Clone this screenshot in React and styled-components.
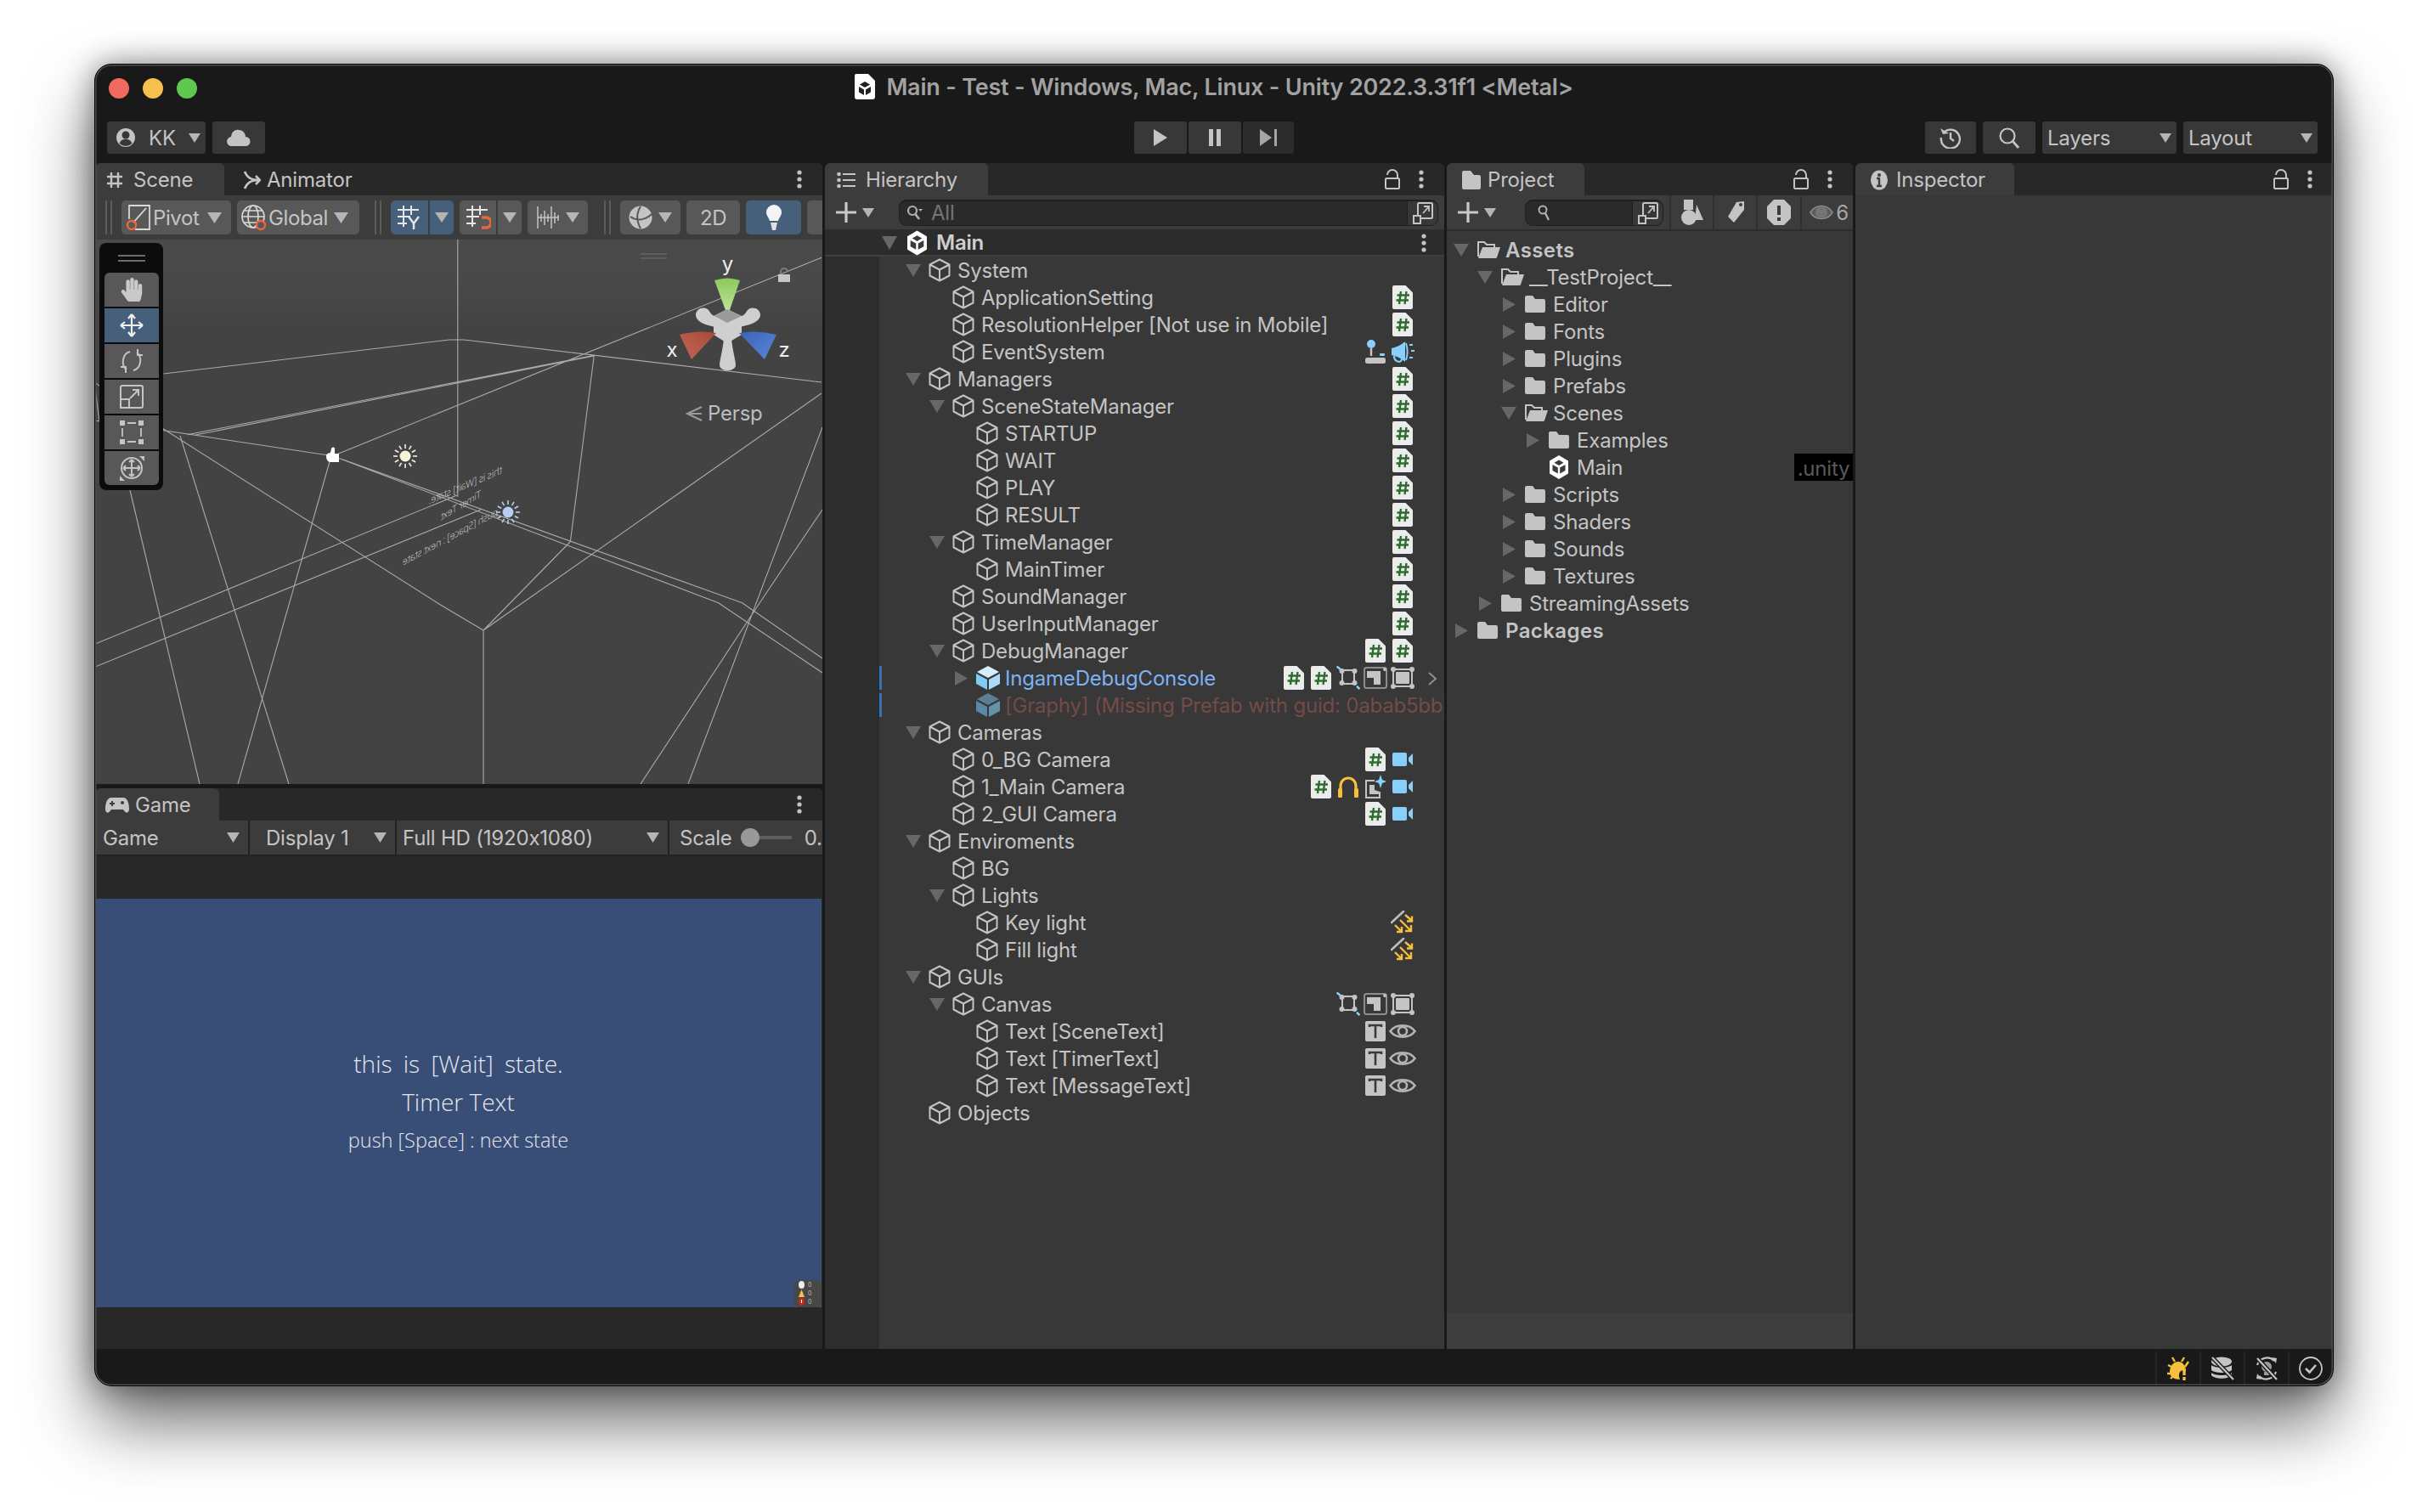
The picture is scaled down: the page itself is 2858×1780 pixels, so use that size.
import React from 'react';
import styled, { createGlobalStyle } from 'styled-components';
import { FaHandPaper } from 'react-icons/fa';

const FONT = 'Inter, "Liberation Sans", sans-serif';
const TXT = '#c4c4c4';
const BLUE = '#88cffb';
const YEL = '#f6bf3c';

const Global = createGlobalStyle`
  html, body { margin: 0; padding: 0; background: #fff; }
  body { font-family: ${FONT}; font-size: 24px; color: ${TXT}; letter-spacing: -0.2px; font-feature-settings: "calt" 0; }
  * { box-sizing: border-box; }
`;

const Page = styled.div`
  width: 2858px; height: 1780px; padding: 75px 111px; background: #fff; overflow: hidden;
`;
const Win = styled.div`
  position: relative; width: 2636px; height: 1557px; background: #191919;
  border: 1px solid #000; border-radius: 20px; overflow: hidden;
  display: flex; flex-direction: column;
`;
const WinShadow = styled.div`
  border-radius: 20px;
  box-shadow: 0 42px 80px rgba(0,0,0,.58), 0 0 34px rgba(0,0,0,.42);
`;
const WinEdge = styled.div`
  position: absolute; inset: 0; border-radius: 19px; pointer-events: none;
  box-shadow: inset 0 0 0 1.5px #4e4e4e;
`;
const TitleBar = styled.div`
  flex: none; height: 56px; padding-bottom: 4px; display: grid; grid-template-columns: 1fr auto 1fr; align-items: center;
`;
const Lights = styled.div`display: flex; gap: 16px; padding: 4px 0 0 16px;`;
const Light = styled.span`width: 24px; height: 24px; border-radius: 50%; background: ${p => p.$c};`;
const TitleText = styled.div`
  display: flex; align-items: center; gap: 13px; font-size: 27px; font-weight: 600; color: #a2a2a2; letter-spacing: -0.2px; white-space: nowrap;
`;
const Toolbar = styled.div`
  flex: none; height: 60px; padding: 0 18px; display: grid; grid-template-columns: 1fr auto 1fr; align-items: center;
`;
const TopGroup = styled.div`display: flex; gap: ${p => p.$gap ?? 8}px; justify-content: ${p => p.$end ? 'flex-end' : 'flex-start'}; margin-left: ${p => p.$ml ?? 0}px;`;
const TopBtn = styled.div`
  width: ${p => p.$w}px; height: 38px; background: ${p => p.$bg || '#383838'}; border-radius: 3px;
  display: flex; align-items: center; justify-content: ${p => p.$between ? 'space-between' : 'center'};
  padding: ${p => p.$between ? `0 6px 0 ${p.$pl ?? 6}px` : '0'}; font-size: 24px; color: ${TXT};
`;
const Panels = styled.div`
  flex: none; height: 1396px; display: grid; grid-template-columns: 856px 729px 478px 1fr; gap: 3px; 
`;
const LeftCol = styled.div`display: flex; flex-direction: column; gap: 5px; min-height: 0;`;
const Panel = styled.section`
  display: flex; flex-direction: column; background: #383838; min-height: 0; overflow: hidden; border-radius: 6px 6px 0 0;
  flex: ${p => p.$h ? `none` : 1}; height: ${p => p.$h ? `${p.$h}px` : 'auto'}; position: relative;
`;
const TabBar = styled.div`flex: none; height: 38px; background: #282828; display: flex; align-items: stretch;`;
const Tab = styled.div`
  display: flex; align-items: center; gap: ${p => p.$gap ?? 9}px; width: ${p => p.$w ? `${p.$w}px` : 'auto'}; padding: 2px 0 0 ${p => p.$pad ?? 8}px;
  background: ${p => p.$on ? '#3c3c3c' : 'transparent'}; color: ${TXT}; font-size: 24px; border-radius: 6px 6px 0 0; line-height: 1; margin-left: ${p => p.$ml ?? 0}px;
`;
const TabActions = styled.div`
  margin-left: auto; display: flex; align-items: center; gap: 22px; padding-right: ${p => p.$pr}px;
`;

const SceneBar = styled.div`
  flex: none; height: 52px; background: #3c3c3c; display: flex; align-items: center; gap: 11px; padding-left: 12px; overflow: hidden;
`;
const Cluster = styled.div`display: flex; gap: 7px;`;
const Handle = styled.i`
  flex: none; width: 8px; height: 40px; margin-left: ${p => p.$ml ?? 0}px; border-left: 2px solid #5c5c5c; border-right: 2px solid #5c5c5c;
`;
const SBtn = styled.div`
  flex: none; display: flex; align-items: center; justify-content: ${p => p.$c ? 'center' : 'flex-start'}; width: ${p => p.$w}px; height: 40px; border-radius: 5px;
  background: ${p => p.$on ? '#46607c' : '#585858'}; color: ${TXT}; font-size: 24px; padding: ${p => p.$c ? 0 : '0 0 0 5px'}; gap: ${p => p.$gap ?? 2}px;
  letter-spacing: -0.4px;
`;
const Spacer = styled.span`flex: none; width: ${p => p.$w}px;`;
const Split = styled.div`
  flex: none; display: flex; height: 40px; gap: 2px;
`;
const SplitPart = styled.div`
  width: ${p => p.$w}px; display: flex; align-items: center; justify-content: center; background: ${p => p.$on ? '#46607c' : '#585858'};
  border-radius: ${p => p.$left ? '5px 0 0 5px' : '0 5px 5px 0'};
`;

const SceneView = styled.div`flex: 1; position: relative; min-height: 0; background: #484848; overflow: hidden;`;
const SceneSvg = styled.svg`display: block; width: 856px; height: 641px;`;
const ToolDock = styled.div`
  position: absolute; left: 5px; top: 4px; width: 75px; height: 291px; background: #0c0c0c; border-radius: 8px;
  display: flex; flex-direction: column; align-items: center; gap: 2px;
`;
const DockGrip = styled.div`
  flex: none; width: 32px; height: 33px; display: flex; flex-direction: column; gap: 4px; justify-content: center; padding-top: 2px;
  & > i { height: 2px; background: #6c6c6c; display: block; }
`;
const DockBtn = styled.div`
  flex: none; width: 64px; height: 40px; background: ${p => p.$on ? '#46607c' : '#585858'}; border-radius: ${p => p.$top ? '6px 6px 0 0' : p.$bot ? '0 0 6px 6px' : '0'};
  display: flex; align-items: center; justify-content: center; color: #c9c9c9;
`;
const Persp = styled.div`
  position: absolute; left: 695px; top: 192px; display: flex; align-items: center; gap: 6px; font-size: 24px; color: #bdbdbd; line-height: 26px;
`;

const GameBar = styled.div`flex: none; height: 42px; padding-bottom: 2px; background: #232323; display: flex; gap: 2px;`;
const GameDrop = styled.div`
  flex: none; width: ${p => p.$w}px; background: #3c3c3c; display: flex; align-items: center; padding: 0 10px 0 ${p => p.$pad}px; justify-content: space-between; font-size: 24px; color: ${TXT}; white-space: nowrap;
`;
const ScaleCell = styled.div`
  flex: 1; background: #3c3c3c; display: flex; align-items: center; padding-left: 12px; font-size: 24px; color: ${TXT}; overflow: hidden; white-space: nowrap;
`;
const SliderTrack = styled.div`
  position: relative; flex: none; width: 60px; height: 4px; margin: 0 15px 0 10px; background: #5e5e5e;
  &::before { content: ''; position: absolute; left: 0; top: -9px; width: 22px; height: 22px; border-radius: 50%; background: #999; }
`;
const GameBody = styled.div`
  flex: 1; min-height: 0; background: #282828; display: flex; flex-direction: column; justify-content: center; padding-right: 1px;
`;
const GameScreen = styled.div`
  position: relative; height: 481px; background: #394e76; display: flex; flex-direction: column; align-items: center; padding-top: 172px;
  font-family: "Open Sans", "Noto Sans", sans-serif; color: #e4e7ee; font-weight: 300; letter-spacing: 0;
`;
const GameLine = styled.div`
  height: ${p => p.$h}px; line-height: ${p => p.$h}px; font-size: ${p => p.$s}px; white-space: nowrap; word-spacing: ${p => p.$ws ?? 0}px;
`;
const Stats = styled.div`
  position: absolute; right: 0; bottom: 0; width: 32px; height: 32px; background: #474747; border-radius: 6px; padding: 1px 0 0 5px;
  display: flex; flex-direction: column; gap: 1px;
`;
const StatRow = styled.div`display: flex; align-items: center; gap: 4px; height: 9px; font-size: 7px; color: #bbb; font-family: ${FONT}; font-weight: 400; line-height: 9px;`;

const SubBar = styled.div`
  flex: none; height: 40px; background: #3c3c3c; display: flex; align-items: center; position: relative;
`;
const AddGroup = styled.div`flex: none; display: flex; align-items: center; gap: 6px; width: ${p => p.$w}px; padding-left: ${p => p.$pad}px;`;
const SearchBox = styled.div`
  flex: ${p => p.$w ? 'none' : 1}; width: ${p => p.$w ? `${p.$w}px` : 'auto'}; height: 31px; background: #2a2a2a; border: 1px solid #1f1f1f; border-top-width: 2px; border-radius: 9px; margin-right: ${p => p.$mr ?? 0}px;
  display: flex; align-items: center; padding-left: ${p => p.$pl ?? 14}px; gap: 9px; color: #757575; font-size: 24px; overflow: hidden;
`;
const SearchExpand = styled.div`
  margin-left: auto; flex: none; width: 36px; height: 100%; display: flex; align-items: center; justify-content: center; background: #383838; border-left: 1px solid #1f1f1f;
`;
const FilterBtn = styled.div`
  flex: ${p => p.$w ? 'none' : 1}; width: ${p => p.$w ? `${p.$w}px` : 'auto'}; height: 100%; background: #3c3c3c; border-left: 2px solid #303030; display: flex; align-items: center; justify-content: center; gap: 3px; padding-left: ${p => p.$pl ?? 0}px; font-size: 24px; color: #a8a8a8; overflow: hidden;
`;

const SceneHead = styled.div`
  flex: none; height: 32px; background: #2c2c2c; border-bottom: 2px solid #3f3f3f; display: flex; align-items: center; padding: 1px 21px 0 67px; font-weight: 600; color: #cfcfcf; font-size: 24px;
`;
const HeadKebab = styled.span`margin-left: auto;`;
const TreeWrap = styled.div`flex: 1; display: flex; min-height: 0;`;
const TreeGutter = styled.div`flex: none; width: 64px; background: #2d2d2d;`;
const TreeList = styled.div`flex: 1; min-width: 0;`;
const Row = styled.div`
  position: relative; height: 32px; display: flex; align-items: center; padding: 0 33px 0 ${p => 31 + p.$depth * 28}px; white-space: nowrap; overflow: hidden;
  color: ${p => p.$tone === 'blue' ? '#7db2f4' : p.$tone === 'miss' ? '#744a4a' : TXT};
  ${p => p.$mark ? `&::before { content: ''; position: absolute; left: 0; top: 2px; bottom: 2px; width: 3px; background: #3574ae; }` : ''}
`;
const ArrowBox = styled.span`flex: none; width: 18px; margin-right: ${p => p.$mr ?? 9}px; display: flex; align-items: center; justify-content: center;`;
const Name = styled.span`flex: none; margin-left: ${p => p.$ml ?? 8}px; font-weight: ${p => p.$bold ? 600 : 400}; letter-spacing: ${p => p.$bold ? '0.4px' : 'inherit'};`;
const RowIcons = styled.div`margin-left: auto; display: flex; flex: none;`;
const Slot = styled.span`flex: none; width: 32px; height: 32px; display: flex; align-items: center; justify-content: center;`;
const RowChevron = styled.span`position: absolute; right: 8px; top: 9px; display: flex;`;

const ProjectList = styled.div`flex: 1; min-height: 0; border-top: 2px solid #2c2c2c; padding-top: 6px;`;
const PRow = styled.div`
  height: 32px; display: flex; align-items: center; padding-left: ${p => 8 + p.$depth * 28}px; white-space: nowrap; color: ${TXT}; 
`;
const UnityTag = styled.span`
  margin-left: auto; align-self: stretch; width: 69px; background: #000; color: #5a5a5a; font-size: 24px; display: flex; align-items: center; justify-content: center; padding-top: 3px;
`;
const ProjectFoot = styled.div`flex: none; height: 42px; background: #3e3e3e;`;
const Status = styled.div`flex: 1; background: #191919; display: flex; justify-content: flex-end; padding-right: 1px;`;
const StatusCell = styled.div`
  width: 52px; height: 40px; margin-top: 3px; border-left: 2px solid #262626; display: flex; align-items: center; justify-content: center;
`;

/* ---------- icons ---------- */
const Svg = ({ w, h, vb, children, ...r }) => (
  <svg width={w} height={h} viewBox={vb || `0 0 ${w} ${h}`} style={{ display: 'block', flex: 'none' }} fill="none" {...r}>{children}</svg>
);
const Tri = ({ dir = 'down', w = 14, h = 11, c = '#b5b5b5' }) => (
  <Svg w={w} h={h} vb="0 0 10 10" preserveAspectRatio="none">
    <path d={dir === 'down' ? 'M0 0H10L5 10Z' : 'M0 0L10 5L0 10Z'} fill={c} />
  </Svg>
);
const Fold = ({ dir }) => dir === 'down' ? <Tri w={18} h={15} c="#676767" /> : <Tri dir="right" w={15} h={17} c="#676767" />;
const Cube = () => (
  <Svg w={26} h={28}><path d="M13 1.5 24.5 7.5V20.5L13 26.5 1.5 20.5V7.5ZM1.5 7.5 13 13.5 24.5 7.5M13 13.5V26.5" stroke="#c4c4c4" strokeWidth="2" strokeLinejoin="round" /></Svg>
);
const SolidCube = ({ a, b, c }) => (
  <Svg w={28} h={28}>
    <path d="M14 0 27 7 14 14 1 7Z" fill={a} />
    <path d="M0 9 13 16V28L0 21Z" fill={b} />
    <path d="M28 9 15 16V28L28 21Z" fill={c} />
  </Svg>
);
const UnityLogo = ({ w = 24, h = 28 }) => (
  <Svg w={w} h={h} vb="0 0 24 28">
    <path d="M12 0 23 6.5V21.5L12 28 1 21.5V6.5Z" fill="#fff" />
    <path d="M12 5.5 17.5 8.7 12 12 6.5 8.7ZM4.5 11 10.8 14.5V21.5L4.5 18ZM19.5 11 13.2 14.5V21.5L19.5 18Z" fill="#3a3a3a" />
  </Svg>
);
const Script = () => (
  <Svg w={24} h={28}>
    <path d="M2 0H15.5L24 8.5V26a2 2 0 0 1-2 2H2a2 2 0 0 1-2-2V2a2 2 0 0 1 2-2Z" fill="#ececec" />
    <path d="M10 7 8 22M16.5 7 14.5 22M5.5 11.5H20M4.5 17.5H19" stroke="#2f6b2f" strokeWidth="2.4" />
  </Svg>
);
const Joy = () => (
  <Svg w={24} h={28}>
    <circle cx="7" cy="5" r="5" fill={BLUE} /><path d="M7 10v9" stroke="#c4c4c4" strokeWidth="2.5" />
    <rect x="0" y="21" width="24" height="7" rx="2.5" fill="#c4c4c4" /><rect x="17" y="16" width="6" height="3" rx="1" fill={BLUE} />
  </Svg>
);
const Mega = () => (
  <Svg w={28} h={28}>
    <path d="M17 2C11 7 6 9 1 10v8c5 1 10 3 16 8Z" fill={BLUE} />
    <path d="M18 4c2 6 2 14 0 20M22 6h4M24 13h4M22 21h4" stroke={BLUE} strokeWidth="2" />
    <path d="M4 19c0 7 8 9 9 4" stroke={BLUE} strokeWidth="2.2" />
  </Svg>
);
const Cam = () => (
  <Svg w={24} h={16}>
    <rect width="17" height="16" rx="2" fill={BLUE} /><path d="M19 6 24 1V15L19 10Z" fill={BLUE} />
  </Svg>
);
const Phones = () => (
  <Svg w={24} h={26}>
    <path d="M3 24V12a9 9 0 0 1 18 0V24" stroke={YEL} strokeWidth="3.2" />
    <rect x="0" y="15" width="5" height="11" rx="1.5" fill={YEL} /><rect x="19" y="15" width="5" height="11" rx="1.5" fill={YEL} />
  </Svg>
);
const Spark = () => (
  <Svg w={26} h={28}>
    <path d="M12 7H2V27H18V20" stroke="#c4c4c4" strokeWidth="2" /><path d="M6 12H12V18L18 20V23H6Z" fill="#c4c4c4" />
    <path d="M19 0l2 6 5 2-5 2-2 6-2-6-5-2 5-2Z" fill={BLUE} />
  </Svg>
);
const RectT = () => (
  <Svg w={28} h={28}>
    <path d="M5 4 .5.5M24 24l3.5 3" stroke={BLUE} strokeWidth="2.4" />
    <rect x="7" y="5" width="14" height="16" stroke="#c4c4c4" strokeWidth="2" />
    <circle cx="6.5" cy="6" r="3" fill="#c4c4c4" /><circle cx="21.5" cy="6" r="3" fill="#c4c4c4" /><circle cx="6.5" cy="20" r="3" fill="#c4c4c4" /><circle cx="21.5" cy="20" r="3" fill="#c4c4c4" />
  </Svg>
);
const CanvasIco = () => (
  <Svg w={28} h={26}>
    <rect x="1" y="1" width="26" height="24" rx="2.5" stroke="#8d8d8d" strokeWidth="2" />
    <path d="M4 5H20V21H12V13H4Z" fill="#c4c4c4" />
    <circle cx="25" cy="3" r="2" fill="#c4c4c4" />
  </Svg>
);
const RectFill = () => (
  <Svg w={28} h={26}>
    <rect x="3" y="3" width="22" height="20" stroke="#c4c4c4" strokeWidth="2" /><rect x="6" y="6" width="16" height="14" rx="1" fill="#c4c4c4" />
    <circle cx="3" cy="3" r="3" fill="#c4c4c4" /><circle cx="25" cy="3" r="3" fill="#c4c4c4" /><circle cx="3" cy="23" r="3" fill="#c4c4c4" /><circle cx="25" cy="23" r="3" fill="#c4c4c4" />
  </Svg>
);
const DirLight = () => (
  <Svg w={28} h={28}>
    <path d="M1 14 15 1" stroke="#bdbdbd" strokeWidth="2.6" strokeLinecap="round" />
    <g stroke={YEL} strokeWidth="2.4" fill="none">
      <path d="M17 5 25 12M25 6.5V12.5H19" /><path d="M11 11 24 24M24 17V24H17" /><path d="M5 17 13 25M13 19V25H7" />
    </g>
  </Svg>
);
const TextIco = () => (
  <Svg w={24} h={24}>
    <rect width="24" height="24" rx="2" fill="#c4c4c4" /><path d="M5 7V5H19V7M12 5V20" stroke="#3a3a3a" strokeWidth="2.6" />
  </Svg>
);
const EyeIco = () => (
  <Svg w={32} h={24}>
    <path d="M1.5 12C8 3 24 3 30.5 12 24 21 8 21 1.5 12Z" stroke="#b4b4b4" strokeWidth="2.6" />
    <circle cx="16" cy="12" r="5" stroke="#b4b4b4" strokeWidth="2.6" />
  </Svg>
);
const Chev = () => <Svg w={12} h={16}><path d="M2 1 10 8 2 15" stroke="#8f8f8f" strokeWidth="2" /></Svg>;
const FolderIco = () => (
  <Svg w={24} h={20}><path d="M0 2a2 2 0 0 1 2-2h7l3 4h10a2 2 0 0 1 2 2v12a2 2 0 0 1-2 2H2a2 2 0 0 1-2-2Z" fill="#c4c4c4" /></Svg>
);
const FolderOpen = () => (
  <Svg w={27} h={20}>
    <path d="M1 18V1H8l3 3h9v3" stroke="#c4c4c4" strokeWidth="2" fill="none" />
    <path d="M6 7H27L23 19a1.5 1.5 0 0 1-1.4 1H1Z" fill="#c4c4c4" />
  </Svg>
);
const Lock = () => (
  <Svg w={18} h={24}><rect x="1" y="11" width="16" height="12" rx="1" stroke="#c4c4c4" strokeWidth="2" /><path d="M3 7a6 6 0 0 1 12 0v4" stroke="#c4c4c4" strokeWidth="2" /></Svg>
);
const Kebab = () => (
  <Svg w={6} h={22}><circle cx="3" cy="3" r="2.6" fill="#c4c4c4" /><circle cx="3" cy="11" r="2.6" fill="#c4c4c4" /><circle cx="3" cy="19" r="2.6" fill="#c4c4c4" /></Svg>
);
const PlusIco = ({ s = 26 }) => (
  <Svg w={s} h={s} vb="0 0 26 26"><path d="M13 1V25M1 13H25" stroke="#c8c8c8" strokeWidth="3.2" /></Svg>
);
const MagSm = ({ s = 20, c = '#b0b0b0' }) => (
  <Svg w={s} h={s} vb="0 0 20 20"><circle cx="7" cy="7" r="5" stroke={c} strokeWidth="2.2" /><path d="M10.5 11 15 17" stroke={c} strokeWidth="2.6" /><path d="M14 5h5l-2.5 3Z" fill={c} /></Svg>
);
const Expand = () => (
  <Svg w={24} h={26}><rect x="6" y="1" width="17" height="18" rx="1.5" stroke="#c4c4c4" strokeWidth="2" /><rect x="1" y="16" width="8" height="9" stroke="#c4c4c4" strokeWidth="2" fill="#383838" /><path d="M12 13 19 5M13 5H19V11" stroke="#c4c4c4" strokeWidth="1.8" /></Svg>
);

const iconMap = { s: Script, j: Joy, m: Mega, c: Cam, h: Phones, p: Spark, r: RectT, v: CanvasIco, f: RectFill, l: DirLight, t: TextIco, e: EyeIco };

const tree = [
  [0, 'System', 'down', ''],
  [1, 'ApplicationSetting', null, 's'],
  [1, 'ResolutionHelper [Not use in Mobile]', null, 's'],
  [1, 'EventSystem', null, 'jm'],
  [0, 'Managers', 'down', 's'],
  [1, 'SceneStateManager', 'down', 's'],
  [2, 'STARTUP', null, 's'],
  [2, 'WAIT', null, 's'],
  [2, 'PLAY', null, 's'],
  [2, 'RESULT', null, 's'],
  [1, 'TimeManager', 'down', 's'],
  [2, 'MainTimer', null, 's'],
  [1, 'SoundManager', null, 's'],
  [1, 'UserInputManager', null, 's'],
  [1, 'DebugManager', 'down', 'ss'],
  [2, 'IngameDebugConsole', 'right', 'ssrvf', 'blue'],
  [2, '[Graphy] (Missing Prefab with guid: 0abab5bb)', null, '', 'miss'],
  [0, 'Cameras', 'down', ''],
  [1, '0_BG Camera', null, 'sc'],
  [1, '1_Main Camera', null, 'shpc'],
  [1, '2_GUI Camera', null, 'sc'],
  [0, 'Enviroments', 'down', ''],
  [1, 'BG', null, ''],
  [1, 'Lights', 'down', ''],
  [2, 'Key light', null, 'l'],
  [2, 'Fill light', null, 'l'],
  [0, 'GUIs', 'down', ''],
  [1, 'Canvas', 'down', 'rvf'],
  [2, 'Text [SceneText]', null, 'te'],
  [2, 'Text [TimerText]', null, 'te'],
  [2, 'Text [MessageText]', null, 'te'],
  [0, 'Objects', null, ''],
];

const project = [
  [0, 'Assets', 'down', 'open', true],
  [1, '__TestProject__', 'down', 'open'],
  [2, 'Editor', 'right', 'f'],
  [2, 'Fonts', 'right', 'f'],
  [2, 'Plugins', 'right', 'f'],
  [2, 'Prefabs', 'right', 'f'],
  [2, 'Scenes', 'down', 'open'],
  [3, 'Examples', 'right', 'f'],
  [3, 'Main', null, 'unity'],
  [2, 'Scripts', 'right', 'f'],
  [2, 'Shaders', 'right', 'f'],
  [2, 'Sounds', 'right', 'f'],
  [2, 'Textures', 'right', 'f'],
  [1, 'StreamingAssets', 'right', 'f'],
  [0, 'Packages', 'right', 'f', true],
];

/* ---------- scene drawing: coordinates are page pixels ---------- */
const HY = 340, BY = 923;
function family(vpx, step, tmin) {
  const reach = 1700;
  const n = Math.ceil(reach / tmin / step);
  let d = '';
  for (let i = -n; i <= n; i++) {
    if (i === 0) continue;
    const off = i * step;
    const t = Math.min(1, Math.max(tmin, reach / Math.abs(off)));
    const y0 = HY + (BY - HY) * t;
    const x0 = vpx + off * t;
    d += `M${x0.toFixed(1)} ${y0.toFixed(1)}L${(vpx + off).toFixed(1)} ${BY}`;
  }
  return d;
}
const GRID = [
  { d: family(-140, 8.6, 0.1), o: 0.04 },
  { d: family(1340, 8.6, 0.1), o: 0.04 },
  { d: family(-140, 86, 0.025), o: 0.2 },
  { d: family(1340, 86, 0.025), o: 0.2 },
];
const Z = (x, y) => `${(100 + x / 1.782).toFixed(1)} ${(290 + y / 3).toFixed(1)}`;
const zLine = (a, b, c, d) => `M${Z(a, b)}L${Z(c, d)}`;
const BRIGHT = [
  zLine(165, 450, 765, 330), zLine(765, 330, 795, 330), zLine(795, 330, 1545, 480),
  zLine(215, 665, 1068, 385), zLine(230, 667, 1068, 387),
  zLine(165, 650, 520, 740),
  zLine(520, 740, 1545, 40),
  zLine(520, 740, 1330, 1260), zLine(540, 752, 1380, 1260),
  zLine(782, -30, 782, 885),
  zLine(20, 480, 30, 615), zLine(20, 615, 165, 650), zLine(20, 480, 165, 650),
  'M212 513L340 923', 'M389 540L280 923',
  zLine(1068, 385, 1018, 1045), 'M671 638L569 742', 'M967 463L569 742',
  'M538 583L112 758', 'M566 600L112 785',
  zLine(160, 640, 740, 1260), 'M515 710L569 742',
  'M569 742V923',
  'M754 923L894 710L968 600', 'M810 923L968 503',
  'M153 577L235 923', 'M846 710L968 792', 'M874 710L968 775',
].join('');

const Sun = ({ x, y, c }) => (
  <g transform={`translate(${x} ${y})`}>
    {[...Array(12)].map((_, i) => {
      const a = i * Math.PI / 6;
      return <line key={i} x1={Math.cos(a) * 9} y1={Math.sin(a) * 9} x2={Math.cos(a) * 14} y2={Math.sin(a) * 14} stroke={c} strokeWidth="1.6" />;
    })}
    <circle r="6.5" fill={c} />
  </g>
);

const GizmoArm = ({ d }) => <path d={d} fill="#cfcfcf" />;

const SceneDrawing = () => (
  <SceneSvg viewBox="112 282 856 641">
    <defs>
      <linearGradient id="skyg" x1="0" y1="0" x2="0" y2="1">
        <stop offset="0" stopColor="#4a4a4a" /><stop offset="0.09" stopColor="#484848" /><stop offset="0.16" stopColor="#434343" /><stop offset="1" stopColor="#434343" />
      </linearGradient>
      <linearGradient id="gy" x1="0" y1="1" x2="0" y2="0"><stop offset="0" stopColor="#c4e8a0" /><stop offset="1" stopColor="#8cc85c" /></linearGradient>
      <linearGradient id="gr" x1="1" y1="0" x2="0" y2="1"><stop offset="0" stopColor="#a84a3a" /><stop offset="1" stopColor="#c46654" /></linearGradient>
      <linearGradient id="gb" x1="0" y1="0" x2="1" y2="1"><stop offset="0" stopColor="#3d62b0" /><stop offset="1" stopColor="#5a86e0" /></linearGradient>
    </defs>
    <rect x="112" y="282" width="856" height="641" fill="url(#skyg)" />
    {GRID.map((g, i) => <path key={i} d={g.d} stroke="#fff" strokeOpacity={g.o} strokeWidth="1" fill="none" />)}
    <path d={BRIGHT} stroke="#dcdcdc" strokeOpacity="0.68" strokeWidth="1.1" fill="none" />
    <path d="M754 299H785M754 304H785" stroke="#5c5c5c" strokeWidth="2" />
    {/* hand gizmo */}
    <path d="M384 537c0-3 3-4 5-4l1-5c1-2 4-2 4 0v6h5v10h-10c-3 0-5-3-5-7Z" fill="#fff" />
    <Sun x={477} y={537} c="#f7f3d8" />
    <Sun x={598} y={603} c="#b9ccf2" />
    <g fill="#d4d4d4" fontFamily="'Open Sans', sans-serif" fontSize="12" fontWeight="300">
      <text transform="matrix(-0.92 0.39 0 1 591 557)">this is [Wait] state.</text>
      <text transform="matrix(-0.86 0.51 0 1 566 585)">Timer Text</text>
      <text transform="matrix(-0.88 0.47 0 1 586 606)">push [Space] : next state</text>
    </g>
    {/* orientation gizmo */}
    <g>
      <path d="M856.5 372 841 330Q856 325 871 330Z" fill="url(#gy)" />
      <GizmoArm d="M856 388C838 384 820 382 819 371 819 362 832 359 836 368 840 374 848 374 856 378Z" />
      <GizmoArm d="M856 388C874 384 894 382 895 371 895 362 882 359 878 368 874 374 866 374 856 378Z" />
      <GizmoArm d="M840 372 856 364 873 372 873 394 856 404 840 394Z" />
      <path d="M841 372 856 364 873 372 856 380Z" fill="#9a9a9a" />
      <GizmoArm d="M852 398C851 412 847 424 847 430 848 438 865 438 866 430 866 424 862 412 861 398Z" />
      <path d="M814 423 800 394Q822 388 843 392Z" fill="url(#gr)" />
      <path d="M900 423 870 392Q892 388 914 394Z" fill="url(#gb)" />
      <text x="856.5" y="319" textAnchor="middle" fill="#eee" fontSize="24" fontFamily="Inter, sans-serif">y</text>
      <text x="791" y="420" textAnchor="middle" fill="#eee" fontSize="24" fontFamily="Inter, sans-serif">x</text>
      <text x="923" y="420" textAnchor="middle" fill="#eee" fontSize="24" fontFamily="Inter, sans-serif">z</text>
      <rect x="916" y="323" width="14" height="9" fill="#c8c8c8" />
      <path d="M919 323v-3a4 4 0 0 1 8 0" stroke="#888" strokeWidth="1.6" fill="none" />
    </g>
  </SceneSvg>
);

const SnapGrid = ({ accent, y }) => (
  <Svg w={30} h={30}>
    <path d="M8 1V26M17 1V12M1 6H26M1 14H16M1 22H12" stroke="#e6e6e6" strokeWidth="2" />
    {y && <path d="M14 14 20 22 26 14M20 22V29" stroke="#e6e6e6" strokeWidth="2.4" />}
    {accent && <path d="M19 15h5a5 5 0 0 1 0 12h-5" stroke="#e8673a" strokeWidth="3.4" />}
  </Svg>
);

export default function App() {
  return (
    <Page>
      <Global />
      <WinShadow>
        <Win>
          <TitleBar>
            <Lights>
              <Light $c="#ef6b5f" /><Light $c="#f6c04f" /><Light $c="#5dc750" />
            </Lights>
            <TitleText>
              <Svg w={24} h={30}>
                <path d="M2 0H16L24 8V27a3 3 0 0 1-3 3H3a3 3 0 0 1-3-3V2a2 2 0 0 1 2-2Z" fill="#fff" />
                <path d="M12 9 18 12.5 12 16 6 12.5ZM5 15 11 18.5V25L5 21.5ZM19 15 13 18.5V25L19 21.5Z" fill="#222" />
              </Svg>
              Main - Test - Windows, Mac, Linux - Unity 2022.3.31f1 &lt;Metal&gt;
            </TitleText>
            <span />
          </TitleBar>
          <Toolbar>
            <TopGroup $ml={-4}>
              <TopBtn $w={116} $between $pl={10}>
                <Svg w={24} h={24}>
                  <circle cx="12" cy="12" r="11" fill="#c4c4c4" /><circle cx="12" cy="9" r="4.5" fill="#383838" /><path d="M4.5 19a8 8 0 0 1 15 0 11 11 0 0 1-15 0Z" fill="#383838" />
                </Svg>
                <span>KK</span>
                <Tri />
              </TopBtn>
              <TopBtn $w={62}>
                <Svg w={28} h={20}><path d="M6 20a5.5 5.5 0 0 1-.8-11A7.5 7.5 0 0 1 14 1a8 8 0 0 1 8 8 5.5 5.5 0 0 1 0 11Z" fill="#c4c4c4" /></Svg>
              </TopBtn>
            </TopGroup>
            <TopGroup $gap={2}>
              <TopBtn $w={62}><Svg w={18} h={22}><path d="M1 1 17 11 1 21Z" fill="#c4c4c4" /></Svg></TopBtn>
              <TopBtn $w={62}><Svg w={16} h={22}><path d="M1 1H6V21H1ZM10 1H15V21H10Z" fill="#c4c4c4" /></Svg></TopBtn>
              <TopBtn $w={60} $bg="#2c2c2c"><Svg w={22} h={22}><path d="M1 1 15 11 1 21Z" fill="#a5a5a5" /><path d="M18 1H21V21H18Z" fill="#a5a5a5" /></Svg></TopBtn>
            </TopGroup>
            <TopGroup $end>
              <TopBtn $w={60}>
                <Svg w={26} h={26}>
                  <path d="M5 7A11 11 0 1 1 2 13" stroke="#c4c4c4" strokeWidth="2.4" /><path d="M1 2 4 9 11 8" fill="#c4c4c4" /><path d="M13 7V14L17 17" stroke="#c4c4c4" strokeWidth="2.4" />
                </Svg>
              </TopBtn>
              <TopBtn $w={62}>
                <Svg w={26} h={26}><circle cx="11" cy="11" r="8.5" stroke="#c4c4c4" strokeWidth="2.2" /><path d="M17 17 24 25" stroke="#c4c4c4" strokeWidth="2.8" /></Svg>
              </TopBtn>
              <TopBtn $w={158} $between>Layers<Tri /></TopBtn>
              <TopBtn $w={158} $between>Layout<Tri /></TopBtn>
            </TopGroup>
          </Toolbar>

          <Panels>
            <LeftCol>
              <Panel $h={731}>
                <TabBar>
                  <Tab $on $w={152} $pad={14} $gap={13}>
                    <Svg w={18} h={20}><path d="M5 1V19M13 1V19M0 6H18M0 14H18" stroke="#c4c4c4" strokeWidth="2.4" /></Svg>
                    Scene
                  </Tab>
                  <Tab $pad={0} $ml={21} $gap={7}>
                    <Svg w={22} h={22}><path d="M3 1C6 8 10 11 21 11M3 21C6 14 10 11 21 11M16 6l5 5-5 5" stroke="#c4c4c4" strokeWidth="2.6" /></Svg>
                    Animator
                  </Tab>
                  <TabActions $pr={24}><Kebab /></TabActions>
                </TabBar>
                <SceneBar>
                  <Handle />
                  <Cluster>
                    <SBtn $w={129}>
                      <Svg w={30} h={32}><path d="M4 18V2H28V30H11" stroke="#d8d8d8" strokeWidth="1.8" /><path d="M9 22 24 5" stroke="#d8d8d8" strokeWidth="1.8" /><circle cx="7" cy="25" r="5" stroke="#e8673a" strokeWidth="2.4" /></Svg>
                      Pivot<Spacer $w={6} /><Tri w={17} h={13} />
                    </SBtn>
                    <SBtn $w={144}>
                      <Svg w={30} h={32}><circle cx="14" cy="15" r="13" stroke="#d8d8d8" strokeWidth="1.7" /><ellipse cx="14" cy="15" rx="6" ry="13" stroke="#d8d8d8" strokeWidth="1.7" /><path d="M1 15H27M3 8H25M3 22H25" stroke="#d8d8d8" strokeWidth="1.7" /><circle cx="23" cy="25" r="5" stroke="#e8673a" fill="#585858" strokeWidth="2.4" /></Svg>
                      Global<Spacer $w={3} /><Tri w={17} h={13} />
                    </SBtn>
                  </Cluster>
                  <Handle $ml={7} />
                  <Cluster>
                    <Split>
                      <SplitPart $on $left $w={44}><SnapGrid y /></SplitPart>
                      <SplitPart $on $w={28}><Tri w={16} h={12} /></SplitPart>
                    </Split>
                    <Split>
                      <SplitPart $left $w={43}><SnapGrid accent /></SplitPart>
                      <SplitPart $w={28}><Tri w={16} h={12} /></SplitPart>
                    </Split>
                    <SBtn $w={71} $c $gap={8}>
                      <Svg w={26} h={30}><path d="M1 2V28M5 11V20M9 7V24M13 11V20M17 2V28M21 9V22M25 12V19" stroke="#c4c4c4" strokeWidth="1.5" /><path d="M1 15H26" stroke="#c4c4c4" strokeWidth="1.5" /></Svg>
                      <Tri w={16} h={12} />
                    </SBtn>
                  </Cluster>
                  <Handle $ml={8} />
                  <Cluster>
                    <SBtn $w={71} $c $gap={7}>
                      <Svg w={28} h={30}><circle cx="14" cy="15" r="13.5" fill="#c4c4c4" /><path d="M14 2c-5 8-5 17 0 26M2 14c8 6 18 4 25-3" stroke="#585858" strokeWidth="2" fill="none" /></Svg>
                      <Tri w={16} h={12} />
                    </SBtn>
                    <SBtn $w={63} $c>2D</SBtn>
                    <SBtn $w={65} $on $c>
                      <Svg w={18} h={30}><path d="M9 0a9 9 0 0 1 9 9c0 4-3 6-4 10H4C3 15 0 13 0 9a9 9 0 0 1 9-9Z" fill="#f4f4f4" /><path d="M5 21H13L11 30H7Z" fill="#dfdfdf" /></Svg>
                    </SBtn>
                    <SBtn $w={40} $c />
                  </Cluster>
                </SceneBar>
                <SceneView>
                  <SceneDrawing />
                  <ToolDock>
                    <DockGrip><i /><i /></DockGrip>
                    <DockBtn $top><FaHandPaper size={28} /></DockBtn>
                    <DockBtn $on>
                      <Svg w={30} h={30}><path d="M15 2V28M2 15H28M15 2l-4 5M15 2l4 5M15 28l-4-5M15 28l4-5M2 15l5-4M2 15l5 4M28 15l-5-4M28 15l-5 4" stroke="#f0f0f0" strokeWidth="2.2" /></Svg>
                    </DockBtn>
                    <DockBtn>
                      <Svg w={30} h={30}><path d="M13 4C4 6 2 20 9 25M17 26c9-2 11-16 4-21" stroke="#c4c4c4" strokeWidth="2" /><path d="M22 1V8H28" stroke="#c4c4c4" strokeWidth="2" /><path d="M8 29V22H2" stroke="#c4c4c4" strokeWidth="2" /></Svg>
                    </DockBtn>
                    <DockBtn>
                      <Svg w={28} h={28}><rect x="1" y="1" width="26" height="26" rx="2" stroke="#c4c4c4" strokeWidth="2" /><rect x="1" y="17" width="10" height="10" stroke="#c4c4c4" strokeWidth="2" /><path d="M12 16 22 6M15 6H22V13" stroke="#c4c4c4" strokeWidth="2" /></Svg>
                    </DockBtn>
                    <DockBtn>
                      <Svg w={28} h={28}><path d="M9 3H19M9 25H19M3 9V19M25 9V19" stroke="#c4c4c4" strokeWidth="1.8" /><rect x="0" y="0" width="6" height="6" fill="#c4c4c4" /><rect x="22" y="0" width="6" height="6" fill="#c4c4c4" /><rect x="0" y="22" width="6" height="6" fill="#c4c4c4" /><rect x="22" y="22" width="6" height="6" fill="#c4c4c4" /></Svg>
                    </DockBtn>
                    <DockBtn $bot>
                      <Svg w={30} h={30}><circle cx="15" cy="15" r="12" stroke="#c4c4c4" strokeWidth="2" /><path d="M15 5V25M5 15H25M15 5l-3 3M15 5l3 3M15 25l-3-3M15 25l3-3M5 15l3-3M5 15l3 3M25 15l-3-3M25 15l-3 3" stroke="#c4c4c4" strokeWidth="2" /><path d="M24 1h6v6ZM1 24v6h6Z" fill="#c4c4c4" /></Svg>
                    </DockBtn>
                  </ToolDock>
                  <Persp>
                    <Svg w={20} h={20}><path d="M19 2 2 10 19 18M2 10H19" stroke="#9a9a9a" strokeWidth="2" /></Svg>
                    Persp
                  </Persp>
                </SceneView>
              </Panel>

              <Panel>
                <TabBar>
                  <Tab $on $w={146} $pad={12} $gap={7}>
                    <Svg w={28} h={20}>
                      <path d="M7 1H21C26 1 28 8 28 14 28 20 24 20 21 15H7C4 20 0 20 0 14 0 8 2 1 7 1Z" fill="#c4c4c4" /><circle cx="20" cy="7" r="2" fill="#3c3c3c" /><path d="M5 8H11M8 5V11" stroke="#3c3c3c" strokeWidth="2" />
                    </Svg>
                    Game
                  </Tab>
                  <TabActions $pr={24}><Kebab /></TabActions>
                </TabBar>
                <GameBar>
                  <GameDrop $w={180} $pad={9}>Game<Tri w={15} h={12} /></GameDrop>
                  <GameDrop $w={171} $pad={19}>Display 1<Tri w={15} h={12} /></GameDrop>
                  <GameDrop $w={319} $pad={7}>Full HD (1920x1080)<Tri w={15} h={12} /></GameDrop>
                  <ScaleCell>Scale<SliderTrack />0.5x</ScaleCell>
                </GameBar>
                <GameBody>
                  <GameScreen>
                    <GameLine $h={45} $s={28} $ws={6}>this is [Wait] state.</GameLine>
                    <GameLine $h={45} $s={28}>Timer Text</GameLine>
                    <GameLine $h={44} $s={23.5}>push [Space] : next state</GameLine>
                    <Stats>
                      <StatRow><Svg w={7} h={9}><ellipse cx="3.5" cy="4.5" rx="3.5" ry="4.5" fill="#eee" /></Svg>0</StatRow>
                      <StatRow><Svg w={7} h={9}><path d="M3.5 0 7 9H0Z" fill="#f2c341" /></Svg>0</StatRow>
                      <StatRow><Svg w={7} h={9}><ellipse cx="3.5" cy="4.5" rx="3.5" ry="4.5" fill="#c92a1e" /><path d="M3.5 2V6" stroke="#fff" /></Svg>0</StatRow>
                    </Stats>
                  </GameScreen>
                </GameBody>
              </Panel>
            </LeftCol>

            <Panel>
              <TabBar>
                <Tab $on $w={192} $pad={14} $gap={12}>
                  <Svg w={22} h={20}><path d="M7 3H22M7 10H22M7 17H22" stroke="#c4c4c4" strokeWidth="2.2" /><circle cx="2.5" cy="3" r="2.3" fill="#c4c4c4" /><circle cx="2.5" cy="10" r="2.3" fill="#c4c4c4" /><circle cx="2.5" cy="17" r="2.3" fill="#c4c4c4" /></Svg>
                  Hierarchy
                </Tab>
                <TabActions $pr={24}><Lock /><Kebab /></TabActions>
              </TabBar>
              <SubBar>
                <AddGroup $w={87} $pad={12}><PlusIco /><Tri w={14} h={11} /></AddGroup>
                <SearchBox $mr={7} $pl={8}>
                  <MagSm />All
                  <SearchExpand><Expand /></SearchExpand>
                </SearchBox>
              </SubBar>
              <SceneHead>
                <Tri w={18} h={16} c="#676767" />
                <Spacer $w={11} />
                <UnityLogo w={25} h={30} />
                <Spacer $w={10} />
                Main
                <HeadKebab><Kebab /></HeadKebab>
              </SceneHead>
              <TreeWrap>
                <TreeGutter />
                <TreeList>
                  {tree.map(([depth, name, arrow, icons, tone], i) => (
                    <Row key={i} $depth={depth} $tone={tone} $mark={!!tone}>
                      <ArrowBox>{arrow && <Fold dir={arrow} />}</ArrowBox>
                      {tone === 'blue' ? <SolidCube a="#d5effe" b="#7fcbf8" c="#a6ddfb" /> : tone === 'miss' ? <SolidCube a="#5b7f96" b="#5a89a5" c="#6591a9" /> : <Cube />}
                      <Name $ml={tone ? 6 : 8}>{name}</Name>
                      {icons && (
                        <RowIcons>
                          {icons.split('').map((k, j) => {
                            const I = iconMap[k];
                            return <Slot key={j}><I /></Slot>;
                          })}
                        </RowIcons>
                      )}
                      {tone === 'blue' && <RowChevron><Chev /></RowChevron>}
                    </Row>
                  ))}
                </TreeList>
              </TreeWrap>
            </Panel>

            <Panel>
              <TabBar>
                <Tab $on $w={162} $pad={18} $gap={8}>
                  <Svg w={22} h={22}><path d="M0 2a2 2 0 0 1 2-2h8l4 5h6a2 2 0 0 1 2 2v13a2 2 0 0 1-2 2H2a2 2 0 0 1-2-2Z" fill="#c4c4c4" /></Svg>
                  Project
                </Tab>
                <TabActions $pr={24}><Lock /><Kebab /></TabActions>
              </TabBar>
              <SubBar>
                <AddGroup $w={92} $pad={12}><PlusIco /><Tri w={14} h={11} /></AddGroup>
                <SearchBox $w={163} $mr={7}>
                  <Svg w={15} h={20}><circle cx="6" cy="6" r="4.5" stroke="#b0b0b0" strokeWidth="2" /><path d="M9 10 13 18" stroke="#b0b0b0" strokeWidth="2.4" /></Svg>
                  <SearchExpand><Expand /></SearchExpand>
                </SearchBox>
                <FilterBtn $w={51}>
                  <Svg w={26} h={30}><path d="M3 0H14V12H3Z" fill="#c4c4c4" /><circle cx="9" cy="21" r="9" fill="#c4c4c4" /><path d="M18 6 26 24H16Z" fill="#c4c4c4" /></Svg>
                </FilterBtn>
                <FilterBtn $w={51}>
                  <Svg w={22} h={26}><path d="M12 1 21 0V10L9 25 2 18Z" fill="#c4c4c4" /><circle cx="17" cy="4" r="2" fill="#3c3c3c" /></Svg>
                </FilterBtn>
                <FilterBtn $w={52}>
                  <Svg w={28} h={30}><path d="M8 0H20L28 8V22L20 30H8L0 22V8Z" fill="#c4c4c4" /><path d="M14 7V18M14 21V25" stroke="#3c3c3c" strokeWidth="4" /></Svg>
                </FilterBtn>
                <FilterBtn $pl={4}>
                  <Svg w={28} h={22}><path d="M1 11C7 1 21 1 27 11 21 21 7 21 1 11Z" fill="#5c5c5c" stroke="#8a8a8a" strokeWidth="1.6" /><circle cx="14" cy="11" r="7" fill="#747474" /></Svg>
                  6
                </FilterBtn>
              </SubBar>
              <ProjectList>
                {project.map(([depth, name, arrow, kind, bold], i) => (
                  <PRow key={i} $depth={depth}>
                    <ArrowBox $mr={10}>{arrow && <Fold dir={arrow} />}</ArrowBox>
                    {kind === 'open' ? <FolderOpen /> : kind === 'unity' ? <UnityLogo /> : <FolderIco />}
                    <Name $ml={kind === 'open' ? 6 : 9} $bold={bold}>{name}</Name>
                    {kind === 'unity' && <UnityTag>.unity</UnityTag>}
                  </PRow>
                ))}
              </ProjectList>
              <ProjectFoot />
            </Panel>

            <Panel>
              <TabBar>
                <Tab $on $w={187} $pad={18} $gap={10}>
                  <Svg w={20} h={24}><ellipse cx="10" cy="12" rx="10" ry="11.5" fill="#c4c4c4" /><path d="M10 10V19M7 10H11M7 19H13" stroke="#3c3c3c" strokeWidth="2.4" /><circle cx="10" cy="6" r="2" fill="#3c3c3c" /></Svg>
                  Inspector
                </Tab>
                <TabActions $pr={24}><Lock /><Kebab /></TabActions>
              </TabBar>
            </Panel>
          </Panels>

          <Status>
            <StatusCell>
              <Svg w={26} h={28}>
                <path d="M13 6c-6 0-10 6-10 12 0 6 5 9 12 9-2-5-1-8 1-10 2-1 4-1 6 0 0-5-3-11-9-11Z" fill={YEL} />
                <path d="M6 1 9 6M20 1 17 6M1 10 5 12M25 6 21 12M0 20H4M4 26 7 23" stroke={YEL} strokeWidth="2.4" />
                <path d="M20 15V22M20 24V28" stroke={YEL} strokeWidth="3.4" />
              </Svg>
            </StatusCell>
            <StatusCell>
              <Svg w={28} h={28}>
                <ellipse cx="13" cy="6" rx="12" ry="5.5" fill="#c4c4c4" />
                <path d="M1 10c4 4 20 4 24 0v6c-4 4-20 4-24 0ZM1 19c4 4 20 4 24 0v3c-4 5-20 5-24 0Z" fill="#c4c4c4" />
                <path d="M2 1 27 27" stroke="#191919" strokeWidth="5" /><path d="M2 1 27 27" stroke="#c4c4c4" strokeWidth="2.2" />
              </Svg>
            </StatusCell>
            <StatusCell>
              <Svg w={28} h={28}>
                <path d="M3 10A12 12 0 0 1 23 5M25 18A12 12 0 0 1 5 23" stroke="#c4c4c4" strokeWidth="2.2" />
                <path d="M20 1l6 1-1 6ZM8 27l-6-1 1-6Z" fill="#c4c4c4" />
                <circle cx="14" cy="12" r="6" fill="#9a9a9a" /><path d="M11 18H17V22H11Z" fill="#9a9a9a" />
                <path d="M3 2 26 27" stroke="#191919" strokeWidth="5" /><path d="M3 2 26 27" stroke="#c4c4c4" strokeWidth="2.2" />
              </Svg>
            </StatusCell>
            <StatusCell>
              <Svg w={28} h={28}>
                <circle cx="14" cy="14" r="13" stroke="#c4c4c4" strokeWidth="1.8" /><path d="M8 14 12.5 18.5 20 10" stroke="#c4c4c4" strokeWidth="2.6" />
              </Svg>
            </StatusCell>
          </Status>
          <WinEdge />
        </Win>
      </WinShadow>
    </Page>
  );
}
